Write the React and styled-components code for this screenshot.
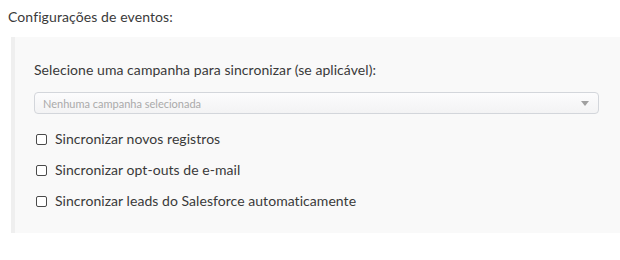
import styled, { createGlobalStyle } from 'styled-components'

const Global = createGlobalStyle`
	body { margin: 0; background: #fff; font-family: Lato, "Open Sans", sans-serif; color: #333; }
`

const Page = styled.div`padding: 7px 0 0 8px;`,
	Heading = styled.div`font-size: 14px; line-height: 20px; color: #3a3a3a; letter-spacing: 0.1px; margin-bottom: 10px;`,
	Panel = styled.div`margin-left: 3px; background: #f9f9f9; border-left: 4px solid #efefef; padding: 23px 21px 22px 19px; display: flex; flex-direction: column;`,
	Label = styled.div`font-size: 14px; line-height: 20px; color: #3a3a3a; letter-spacing: 0.06px;`,
	Select = styled.div`margin-top: 12px; height: 20px; border: 1px solid #d3d6db; border-radius: 4px; background: linear-gradient(#fcfcfd, #f3f3f4); display: flex; align-items: center; justify-content: space-between; padding: 0 9px 0 8px; font-size: 11px; color: #aaa;`,
	Arrow = styled.span`width: 0; height: 0; border-left: 4px solid transparent; border-right: 4px solid transparent; border-top: 5px solid #a0a0a0;`,
	Options = styled.div`margin-top: 15px; display: flex; flex-direction: column; gap: 11px;`,
	Row = styled.label`display: flex; align-items: center; gap: 8px; font-size: 14px; line-height: 20px; color: #3a3a3a; letter-spacing: 0.05px; padding-left: 2px;`,
	Box = styled.span`width: 9px; height: 9px; border: 1.5px solid #4a4a4a; border-radius: 2px; background: #fff;`

const opcoes = [
	'Sincronizar novos registros',
	'Sincronizar opt-outs de e-mail',
	'Sincronizar leads do Salesforce automaticamente',
]

export default function App() {
	return (
		<Page>
			<Global />
			<Heading>Configurações de eventos:</Heading>
			<Panel>
				<Label>Selecione uma campanha para sincronizar (se aplicável):</Label>
				<Select>
					<span>Nenhuma campanha selecionada</span>
					<Arrow />
				</Select>
				<Options>
					{opcoes.map((o) => (
						<Row key={o}><Box />{o}</Row>
					))}
				</Options>
			</Panel>
		</Page>
	)
}
